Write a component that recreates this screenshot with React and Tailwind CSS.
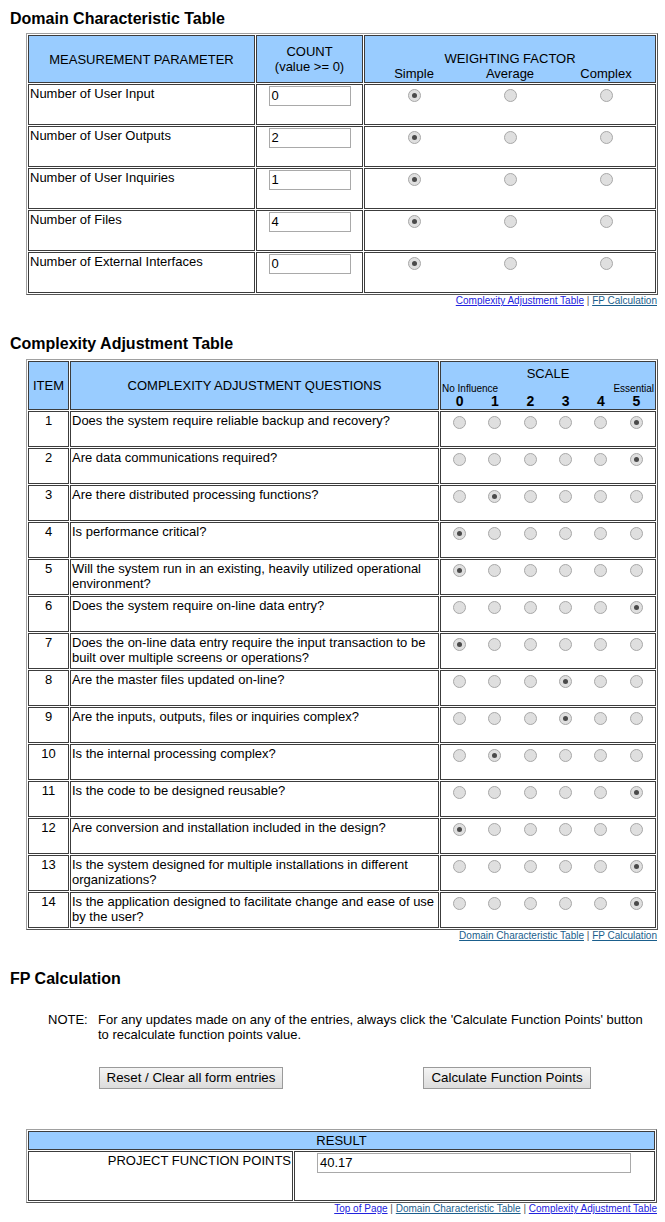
import React from 'react';

const TABLE =
  'ml-[26px] w-[631px] table-fixed border-separate border-spacing-[1px] border border-t-[#a0a0a0] border-l-[#a0a0a0] border-r-[#555] border-b-[#555]';
const TH = 'bg-[#99ccff] border border-[#3c3c3c] p-[1px] font-normal text-center align-middle';
const TD = 'bg-white border border-[#3c3c3c] p-[1px] align-top';

const DOMAIN_ROWS = [
  { label: 'Number of User Input', value: '0' },
  { label: 'Number of User Outputs', value: '2' },
  { label: 'Number of User Inquiries', value: '1' },
  { label: 'Number of Files', value: '4' },
  { label: 'Number of External Interfaces', value: '0' },
];

const QUESTIONS = [
  ['Does the system require reliable backup and recovery?', 5],
  ['Are data communications required?', 5],
  ['Are there distributed processing functions?', 1],
  ['Is performance critical?', 0],
  ['Will the system run in an existing, heavily utilized operational\nenvironment?', 0],
  ['Does the system require on-line data entry?', 5],
  ['Does the on-line data entry require the input transaction to be\nbuilt over multiple screens or operations?', 0],
  ['Are the master files updated on-line?', 3],
  ['Are the inputs, outputs, files or inquiries complex?', 3],
  ['Is the internal processing complex?', 1],
  ['Is the code to be designed reusable?', 5],
  ['Are conversion and installation included in the design?', 0],
  ['Is the system designed for multiple installations in different\norganizations?', 5],
  ['Is the application designed to facilitate change and ease of use\nby the user?', 5],
];

function Radio({ checked }) {
  return (
    <span className="mt-[3px] inline-flex items-center justify-center w-[13px] h-[13px] rounded-full border border-[#a8a8a8] bg-[#dfdfdf]">
      {checked && <span className="w-[5px] h-[5px] rounded-full bg-[#4a4a4a]" />}
    </span>
  );
}

function TextBox({ value, className }) {
  return (
    <div className={`h-[20px] border border-[#a9a9a9] bg-white pl-[2px] text-[13px] leading-[18px] text-black ${className}`}>
      {value}
    </div>
  );
}

function Links({ items }) {
  return (
    <div className="ml-[26px] w-[631px] text-right text-[10px] leading-[12px]">
      {items.map((it, i) => (
        <span key={it.text}>
          {i > 0 && <span className="text-[#555]"> | </span>}
          <span className={`underline ${it.visited ? 'text-[#1a5e8c]' : 'text-[#2222dd]'}`}>{it.text}</span>
        </span>
      ))}
    </div>
  );
}

function Title({ children, className }) {
  return <h3 className={`pl-[10px] text-[16px] leading-[20px] font-bold text-black ${className}`}>{children}</h3>;
}

export default function App() {
  return (
    <div className="bg-white min-h-[1222px] w-[665px] text-black text-[13px] leading-[15px] font-['Liberation_Sans',Arial,sans-serif]">
      <Title className="pt-[9px]">Domain Characteristic Table</Title>

      <table className={`${TABLE} mt-[4px]`}>
        <colgroup>
          <col className="w-[227px]" />
          <col className="w-[107px]" />
          <col className="w-[292px]" />
        </colgroup>
        <thead>
          <tr>
            <th className={`${TH} h-[48px]`}>MEASUREMENT PARAMETER</th>
            <th className={`${TH} h-[48px]`}>
              COUNT
              <br />
              (value &gt;= 0)
            </th>
            <th className={`${TH} h-[48px] !align-bottom`}>
              <div>WEIGHTING FACTOR</div>
              <div className="grid grid-cols-3">
                <span>Simple</span>
                <span>Average</span>
                <span>Complex</span>
              </div>
            </th>
          </tr>
        </thead>
        <tbody>
          {DOMAIN_ROWS.map((r) => (
            <tr key={r.label}>
              <td className={`${TD} h-[41px]`}>{r.label}</td>
              <td className={`${TD} h-[41px]`}>
                <TextBox value={r.value} className="mx-auto w-[82px]" />
              </td>
              <td className={`${TD} h-[41px]`}>
                <div className="grid grid-cols-3 justify-items-center">
                  <Radio checked />
                  <Radio />
                  <Radio />
                </div>
              </td>
            </tr>
          ))}
        </tbody>
      </table>
      <Links
        items={[
          { text: 'Complexity Adjustment Table' },
          { text: 'FP Calculation', visited: true },
        ]}
      />

      <Title className="mt-[27px]">Complexity Adjustment Table</Title>

      <table className={`${TABLE} mt-[5px]`}>
        <colgroup>
          <col className="w-[41px]" />
          <col className="w-[369px]" />
          <col className="w-[216px]" />
        </colgroup>
        <thead>
          <tr>
            <th className={`${TH} h-[48px]`}>ITEM</th>
            <th className={`${TH} h-[48px]`}>COMPLEXITY ADJUSTMENT QUESTIONS</th>
            <th className={`${TH} h-[48px] !align-top`}>
              <div className="pt-[3px]">SCALE</div>
              <div className="mt-[2px] flex justify-between text-[10px] leading-[11px]">
                <span>No Influence</span>
                <span>Essential</span>
              </div>
              <div className="grid grid-cols-6 text-[14px] leading-[14px] font-bold">
                {[0, 1, 2, 3, 4, 5].map((n) => (
                  <span key={n}>{n}</span>
                ))}
              </div>
            </th>
          </tr>
        </thead>
        <tbody>
          {QUESTIONS.map(([q, sel], i) => (
            <tr key={i}>
              <td className={`${TD} h-[36px] text-center`}>{i + 1}</td>
              <td className={`${TD} h-[36px] whitespace-pre-line`}>{q}</td>
              <td className={`${TD} h-[36px]`}>
                <div className="grid grid-cols-6 justify-items-center">
                  {[0, 1, 2, 3, 4, 5].map((n) => (
                    <Radio key={n} checked={n === sel} />
                  ))}
                </div>
              </td>
            </tr>
          ))}
        </tbody>
      </table>
      <Links
        items={[
          { text: 'Domain Characteristic Table', visited: true },
          { text: 'FP Calculation', visited: true },
        ]}
      />

      <Title className="mt-[27px]">FP Calculation</Title>

      <div className="mt-[23px] flex pl-[48px]">
        <span className="w-[50px] shrink-0">NOTE:</span>
        <p>
          For any updates made on any of the entries, always click the 'Calculate Function Points' button
          <br />
          to recalculate function points value.
        </p>
      </div>

      <div className="mt-[25px] flex gap-[140px] pl-[99px]">
        <button className="h-[22px] w-[184px] border border-[#9a9a9a] bg-gradient-to-b from-[#f4f4f4] to-[#dcdcdc] text-[13.33px] leading-[20px] text-black">
          Reset / Clear all form entries
        </button>
        <button className="h-[22px] w-[168px] border border-[#9a9a9a] bg-gradient-to-b from-[#f4f4f4] to-[#dcdcdc] text-[13.33px] leading-[20px] text-black">
          Calculate Function Points
        </button>
      </div>

      <table className={`${TABLE} mt-[40px]`}>
        <colgroup>
          <col className="w-[265px]" />
          <col className="w-[361px]" />
        </colgroup>
        <thead>
          <tr>
            <th colSpan={2} className={`${TH} h-[19px]`}>
              RESULT
            </th>
          </tr>
        </thead>
        <tbody>
          <tr>
            <td className={`${TD} h-[50px] text-right`}>PROJECT FUNCTION POINTS</td>
            <td className={`${TD} h-[50px]`}>
              <TextBox value="40.17" className="ml-[21px] w-[314px]" />
            </td>
          </tr>
        </tbody>
      </table>
      <Links
        items={[
          { text: 'Top of Page' },
          { text: 'Domain Characteristic Table', visited: true },
          { text: 'Complexity Adjustment Table' },
        ]}
      />
    </div>
  );
}
